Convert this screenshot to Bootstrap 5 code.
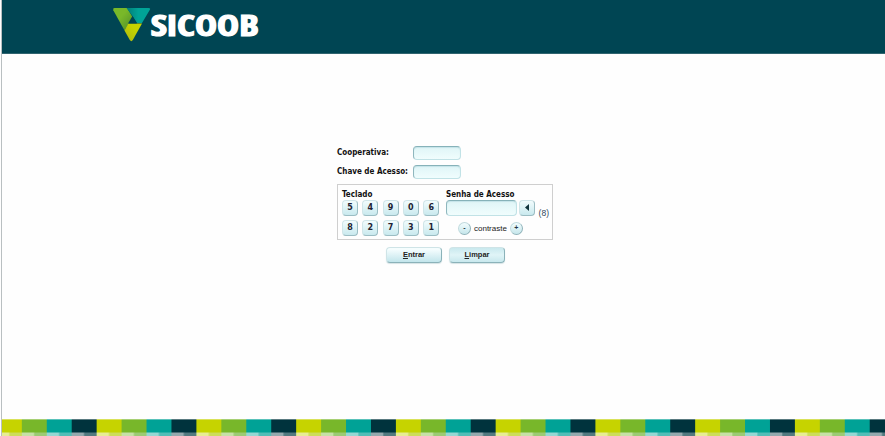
<!DOCTYPE html>
<html lang="pt-BR">
<head>
<meta charset="utf-8">
<meta name="viewport" content="width=device-width, initial-scale=1">
<title>Sicoob</title>
<link href="https://cdn.jsdelivr.net/npm/bootstrap@5.3.0/dist/css/bootstrap.min.css" rel="stylesheet">
<style>
body{height:436px;background:#fefefe;font-family:"DejaVu Sans Condensed","DejaVu Sans",sans-serif;font-stretch:condensed;color:#111;font-size:8px;line-height:10px}
.page{border-left:1px solid #b9bfc1;margin-left:1px}
.topbar{height:54px;background:#004553;padding-left:110px;border-bottom:1px solid #30646f}
.logo{display:block}
.login{width:216px;margin-left:335px;padding-top:91.5px}
.login-row{height:14px;margin-bottom:5px}
.field-label{width:76px;font-weight:700;font-size:8px;white-space:nowrap;padding-top:1px}
.field-label span,.pad-title span{display:inline-block;white-space:nowrap}
.login .form-control{height:14px;min-height:0;padding:0 3px;border-radius:4px;border:1px solid #c1e2e6;border-top-color:#86b2b9;border-left-color:#8fb7be;background:linear-gradient(#dff5f7,#f0fdfd);font-size:8px;box-shadow:inset 0 1px 1px #c5e4e8}
.login .short{width:48px}
.keypad{height:56px;border:1px solid #cfcfcf;margin-top:1px;padding:5px 3px 0 4px;background:#fefefe}
.pad-title{font-weight:700;height:9px;line-height:9px;font-size:8px}
.keys{display:grid;grid-template-columns:repeat(5,16px);column-gap:4.3px;row-gap:4px;margin-top:1px}
.btn.key{height:16px;width:16px;padding:0;border:1px solid #d0e5e8;border-right-color:#9bbdc3;border-bottom-color:#9bbdc3;border-radius:4px;background:linear-gradient(#f2fcfd,#c9e9ee);font:700 8px/13px "DejaVu Sans",sans-serif;font-stretch:normal;color:#223}
.password{width:103px}
.secret-row{margin-top:1px}
.login .secret{width:71px;height:16px}
.count{font:8.5px/10px "Liberation Sans",sans-serif;color:#30475c;margin:8px 0 0 4px;white-space:nowrap}
.contrast{font:8px/13px "Liberation Sans",sans-serif;color:#222;margin:4px 0 0 12px;gap:3px;white-space:nowrap}
.btn.round{width:13px;height:13px;padding:0;border-radius:50%;border:1px solid #c1dade;border-right-color:#8fb2b9;border-bottom-color:#8fb2b9;background:linear-gradient(#f3fdfe,#c5e6eb);font:700 7px/10px "Liberation Sans",sans-serif;color:#234}
.actions{margin:7px 0 0 49px;gap:7px}
.btn.action{width:56px;height:16px;padding:0;border:1px solid #cfe4e7;border-right-color:#8bb2b9;border-bottom-color:#8bb2b9;border-radius:4px;background:linear-gradient(#f5fdfe 10%,#c2e5eb);font:700 7.5px/14px "Liberation Sans",sans-serif;color:#222;box-shadow:0 1px 1px #d5e3e5}
.btn.action.active-tone{background:linear-gradient(#c9e9ee,#e0f4f7 50%,#c8e8ed)}
.strip{height:17.5px;display:block}
</style>
</head>
<body class="overflow-hidden">
<div class="page d-flex flex-column h-100">
<header class="topbar flex-shrink-0">
<svg class="logo" width="156" height="50" role="img" aria-label="Sicoob">
<defs>
<linearGradient id="green" x1="0" y1="0" x2="1" y2="1"><stop offset=".4" stop-color="#79b829"/><stop offset="1" stop-color="#4d8b29"/></linearGradient>
<linearGradient id="teal"><stop offset="0" stop-color="#007d78"/><stop offset=".5" stop-color="#00a397"/></linearGradient>
<linearGradient id="lime" x1="1" y1="0" x2="0" y2="1"><stop offset=".35" stop-color="#c6d300"/><stop offset="1" stop-color="#aab80e"/></linearGradient>
</defs>
<path d="M2.5 8H15L20.5 17L12.5 30.5L1.3 10.2Q.6 8 2.5 8Z" fill="url(#green)"/>
<path d="M14.5 8H36.5Q39 8 37.7 10L30 23H25L20.5 16Z" fill="url(#teal)"/>
<path d="M16.3 23.5H30L20.8 40Q19.3 42.3 17.8 40L12.5 30.5Z" fill="url(#lime)"/>
<path d="M20.5 16L25 23.5H16Z" fill="#004553"/>
<text x="38.8" y="35.5" textLength="108" lengthAdjust="spacingAndGlyphs" font-family="Open Sans, sans-serif" font-size="28.8" font-weight="700" fill="#fff" stroke="#fff" stroke-width="1.2">SICOOB</text>
</svg>
</header>
<main class="flex-grow-1">
<form class="login">
<div class="login-row d-flex align-items-center"><label class="field-label" for="coop"><span>Cooperativa:</span></label><input id="coop" class="form-control short"></div>
<div class="login-row d-flex align-items-center"><label class="field-label" for="chave"><span>Chave de Acesso:</span></label><input id="chave" class="form-control short"></div>
<section class="keypad d-flex justify-content-between">
<div>
<div class="pad-title"><span>Teclado</span></div>
<div class="keys"><button type="button" class="btn key">5</button><button type="button" class="btn key">4</button><button type="button" class="btn key">9</button><button type="button" class="btn key">0</button><button type="button" class="btn key">6</button><button type="button" class="btn key">8</button><button type="button" class="btn key">2</button><button type="button" class="btn key">7</button><button type="button" class="btn key">3</button><button type="button" class="btn key">1</button></div>
</div>
<div class="password">
<div class="pad-title"><span>Senha de Acesso</span></div>
<div class="d-flex secret-row"><input class="form-control secret flex-shrink-0" aria-label="Senha de Acesso"><button type="button" class="btn key ms-auto flex-shrink-0" aria-label="Apagar"><svg class="d-block mx-auto" width="6" height="7"><path d="M5 0V7L1 3.5Z" fill="#12343c"/></svg></button><span class="count">(8)</span></div>
<div class="contrast d-flex align-items-center"><button type="button" class="btn round">-</button><span>contraste</span><button type="button" class="btn round">+</button></div>
</div>
</section>
<div class="actions d-flex"><button type="button" class="btn action"><u>E</u>ntrar</button><button type="button" class="btn action active-tone"><u>L</u>impar</button></div>
</form>
</main>
<svg class="strip flex-shrink-0 w-100" aria-hidden="true">
<defs><pattern id="tiles" x="-5.1" y="0" width="99.75" height="18" patternUnits="userSpaceOnUse">
<path d="M0 0H25V18H0Z" fill="#c6d300"/><path d="M24.94 0H50V18H24.94Z" fill="#78b72a"/><path d="M49.88 0H75V18H49.88Z" fill="#00a296"/><path d="M74.81 0H99.75V18H74.81Z" fill="#00333d"/>
<path d="M0 13.5H12.5V18H0ZM24.94 13.5H37.4V18H24.94ZM49.88 13.5H62.4V18H49.88ZM74.81 13.5H87.3V18H74.81Z" fill="#fff" opacity=".58"/>
<path d="M12.5 13.5H24.94V18H12.5ZM37.4 13.5H49.88V18H37.4ZM62.4 13.5H74.81V18H62.4ZM87.3 13.5H99.75V18H87.3Z" fill="#d9eeee" opacity=".38"/>
</pattern></defs>
<rect width="100%" height="18" fill="url(#tiles)"/><rect width="100%" height="1" fill="#fff" opacity=".35"/>
</svg>
</div>
<script src="https://cdn.jsdelivr.net/npm/bootstrap@5.3.0/dist/js/bootstrap.bundle.min.js"></script>
</body>
</html>
